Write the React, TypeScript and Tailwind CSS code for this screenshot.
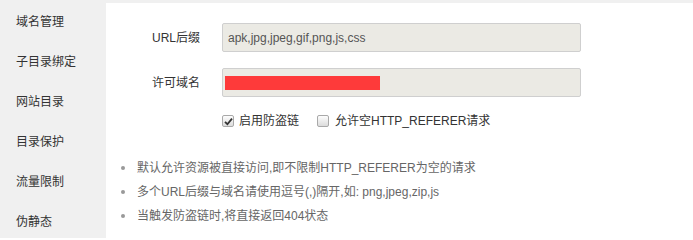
const menu = ["域名管理", "子目录绑定", "网站目录", "目录保护", "流量限制", "伪静态"];

const tips = [
  "默认允许资源被直接访问,即不限制HTTP_REFERER为空的请求",
  "多个URL后缀与域名请使用逗号(,)隔开,如: png,jpeg,zip,js",
  "当触发防盗链时,将直接返回404状态",
];

function Check({ checked }: { checked?: boolean }) {
  return (
    <span className="w-[12px] h-[12px] rounded-[2px] border border-[#a9a9a9] bg-gradient-to-b from-[#fdfdfd] to-[#dcdcdc] flex items-center justify-center">
      {checked && (
        <svg width="9" height="9" viewBox="0 0 9 9">
          <path d="M1 4.8 L3.4 7.2 L8 1.6" fill="none" stroke="#333" strokeWidth="1.8" />
        </svg>
      )}
    </span>
  );
}

export default function App() {
  return (
    <div
      className="w-[693px] h-[238px] bg-[#f0f0f0] flex overflow-hidden text-[12px]"
      style={{ fontFamily: '"Liberation Sans", "Noto Sans CJK SC", sans-serif' }}
    >
      {/* side menu */}
      <div className="w-[106px] pt-[2px] flex flex-col">
        {menu.map((m) => (
          <div key={m} className="h-10 shrink-0 flex items-center pl-4 text-[#333]">
            {m}
          </div>
        ))}
      </div>

      {/* content */}
      <div className="flex-1 mt-[3px] bg-white pt-5">
        <div className="flex items-center">
          <label className="w-[94px] text-right text-[#333]">URL后缀</label>
          <div className="ml-[22px] w-[359px] h-[29px] bg-[#ebeae4] border border-[#cfcfcf] rounded-[2px] flex items-center pl-[5px] text-[#555]">
            apk,jpg,jpeg,gif,png,js,css
          </div>
        </div>
        <div className="flex items-center mt-4">
          <label className="w-[94px] text-right text-[#333]">许可域名</label>
          <div className="ml-[22px] w-[359px] h-[29px] bg-[#ebeae4] border border-[#cfcfcf] rounded-[2px] flex items-center pl-[2px]">
            <div className="w-[155px] h-[14px] bg-[#fe3a3a]" />
          </div>
        </div>
        <div className="flex items-center mt-4 ml-[116px] h-4 text-[#333]">
          <Check checked />
          <span className="ml-[5px]">启用防盗链</span>
          <span className="ml-[18px]">
            <Check />
          </span>
          <span className="ml-[6px]">允许空HTTP_REFERER请求</span>
        </div>
        <ul className="mt-[31px] flex flex-col gap-2 text-[#666]">
          {tips.map((t) => (
            <li key={t} className="flex items-center h-4 pl-[15px]">
              <span className="w-[4px] h-[4px] rounded-full bg-[#999]" />
              <span className="ml-[12px]">{t}</span>
            </li>
          ))}
        </ul>
      </div>
    </div>
  );
}
